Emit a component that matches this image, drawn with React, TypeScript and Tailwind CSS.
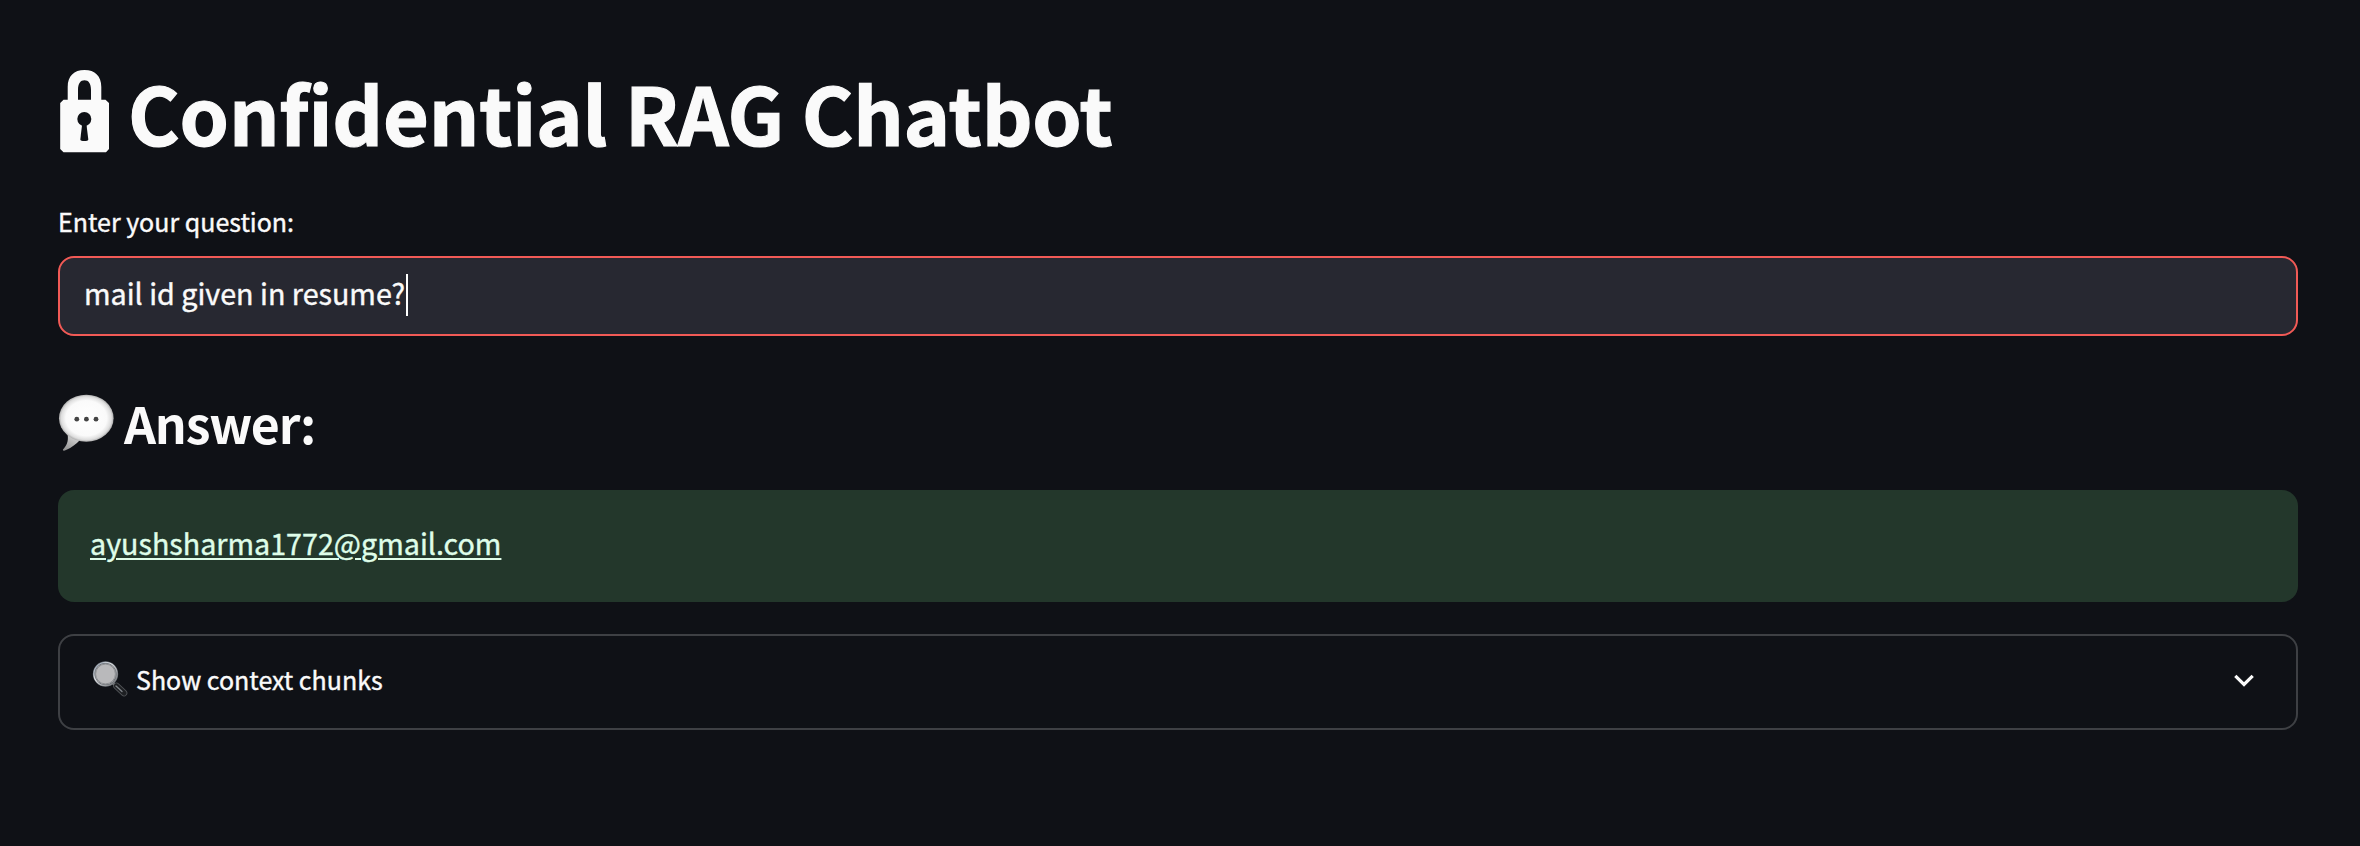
function LockIcon() {
  return (
    <svg viewBox="0 0 50 84" className="h-[84px] w-[50px] shrink-0" fill="#fafafa">
      <path
        fillRule="evenodd"
        d="M7.700 30V17C7.700 6 14 0 24.500 0S41.300 6 41.300 17V29.700H45.500L49 33V79L46 82.300H3.500L0.200 79V33L3.500 29.700H7.700ZM18 29.700H31V20C31 13.500 28.500 10.300 24.500 10.300S18 13.500 18 20Z"
      />
      <circle cx="24.300" cy="49" r="7" fill="#0f1116" />
      <path d="M22.300 53h4l2 16.500c0 1.200-2 1.600-4 1.600s-4-.4-4-1.600z" fill="#0f1116" />
    </svg>
  );
}

function SpeechIcon() {
  return (
    <svg viewBox="0 0 56 58" className="h-[58px] w-[56px] shrink-0">
      <defs>
        <radialGradient id="bubble" cx="0.5" cy="0.5" r="0.52">
          <stop offset="0" stopColor="#ffffff" />
          <stop offset="0.72" stopColor="#fafafa" />
          <stop offset="0.88" stopColor="#dedede" />
          <stop offset="1" stopColor="#989898" />
        </radialGradient>
        <linearGradient id="tail" x1="0.8" y1="0" x2="0.2" y2="1">
          <stop offset="0" stopColor="#dedede" />
          <stop offset="1" stopColor="#929292" />
        </linearGradient>
      </defs>
      <path d="M9.500 40C11 48 8 52 5 55.500C4.500 56.800 6 57 8 56C14 53.500 18 50 22 46Z" fill="url(#tail)" />
      <ellipse cx="28.300" cy="24.200" rx="27.300" ry="23.500" fill="url(#bubble)" />
      <g fill="#444444">
        <circle cx="18.800" cy="25.200" r="2.400" />
        <circle cx="28.400" cy="25.200" r="2.400" />
        <circle cx="38" cy="25.200" r="2.400" />
      </g>
    </svg>
  );
}

function MagnifierIcon() {
  return (
    <svg viewBox="0 0 36 36" className="h-[36px] w-[36px] shrink-0">
      <defs>
        <linearGradient id="rim" x1="0" y1="0" x2="1" y2="1">
          <stop offset="0" stopColor="#8694a6" />
          <stop offset="0.4" stopColor="#e0e2e4" />
          <stop offset="1" stopColor="#66696d" />
        </linearGradient>
      </defs>
      <path d="M20.500 21.500L24 25" stroke="#8b8d90" strokeWidth="3" />
      <path d="M24.500 25L32 32" stroke="#505357" strokeWidth="6.600" strokeLinecap="round" />
      <path d="M24.500 25L32 32" stroke="#1d1f22" strokeWidth="5" strokeLinecap="round" />
      <path d="M24 25L30 30.500" stroke="#80858a" strokeWidth="1.300" strokeLinecap="round" />
      <circle cx="13.500" cy="13" r="11.600" fill="#b9b9bb" stroke="#5b6067" strokeWidth="2.200" />
      <circle cx="13.500" cy="13" r="11.600" fill="none" stroke="url(#rim)" strokeWidth="1.300" />
      <circle cx="13.500" cy="13" r="9.900" fill="none" stroke="#7d7f82" strokeWidth="0.700" />
    </svg>
  );
}

export default function App() {
  return (
    <main className="flex h-[846px] w-full flex-col bg-[#0f1116] pr-[62px] pl-[58px] font-['Noto_Sans_CJK_JP','Noto_Sans_CJK_SC',sans-serif] text-[#fafafa]">
      <h1 className="flex h-[154px] items-end gap-[18px] pl-[2px]">
        <LockIcon />
        <span className="h-[84px] text-[79px] leading-[84px] font-bold tracking-[-0.200px] whitespace-nowrap [-webkit-text-stroke:1.200px_#fafafa]">
          Confidential RAG Chatbot
        </span>
      </h1>
      <label htmlFor="question" className="mt-[48px] h-[54px] text-[25px] leading-[38px] [-webkit-text-stroke:0.400px_#fafafa]">
        Enter your question:
      </label>
      <div id="question" className="flex h-[80px] items-center rounded-[16px] border-2 border-[#f15a56] bg-[#272831] pb-[2px] pl-[24px]">
        <span className="pb-[4px] text-[28.700px] leading-[44px] [-webkit-text-stroke:0.400px_#fafafa]">mail id given in resume?</span>
        <span className="ml-px h-[42px] w-[2px] bg-white" />
      </div>
      <h3 className="mt-[58px] flex h-[96px] gap-[10px]">
        <SpeechIcon />
        <span className="text-[50px] leading-[56px] font-bold tracking-[-1.200px]">Answer:</span>
      </h3>
      <div className="flex h-[112px] items-center rounded-[16px] bg-[#23372b] pb-[6px] pl-[32px]">
        <a className="text-[28.700px] leading-[48px] text-[#dffde9] underline decoration-2 underline-offset-[3px] [-webkit-text-stroke:0.400px_#dffde9]">
          ayushsharma1772@gmail.com
        </a>
      </div>
      <button className="mt-[32px] flex h-[96px] items-center rounded-[16px] border-2 border-[#3e4044] pr-[42px] pb-[6px] pl-[32px] text-left">
        <MagnifierIcon />
        <span className="ml-[8px] text-[25px] leading-[40px] [-webkit-text-stroke:0.400px_#fafafa]">Show context chunks</span>
        <svg viewBox="0 0 20 14" className="mt-[4px] ml-auto h-[14px] w-[20px]" fill="none" stroke="#fafafa" strokeWidth="3.200">
          <path d="M1.300 1.800L10 10.500L18.700 1.800" />
        </svg>
      </button>
    </main>
  );
}
